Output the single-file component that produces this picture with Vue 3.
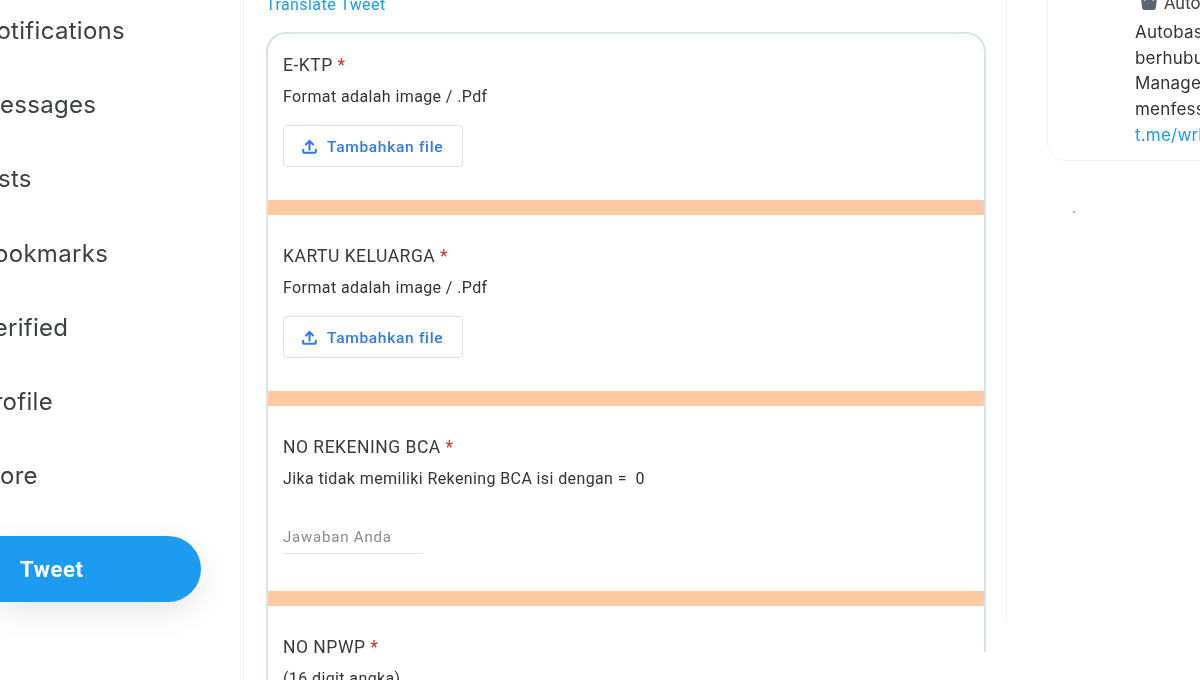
<template>
  <div class="page">
    <aside class="side">
      <ul class="nav">
        <li v-for="item in navItems" :key="item">{{ item }}</li>
      </ul>
      <button class="tweet">Tweet</button>
    </aside>

    <main class="center">
      <a class="translate">Translate Tweet</a>
      <div class="form">
        <section class="field">
          <h3 class="label">E-KTP <span class="req">*</span></h3>
          <p class="desc">Format adalah image / .Pdf</p>
          <button class="add">
            <svg width="19" height="19" viewBox="0 0 24 24" fill="none" stroke="#2f7be8" stroke-width="2.6" stroke-linecap="round">
              <path d="M12 16V5M7.5 9.5L12 5l4.500 4.500" />
              <path d="M4 16v2a2 2 0 0 0 2 2h12a2 2 0 0 0 2-2v-2" />
            </svg>
            Tambahkan file
          </button>
        </section>
        <div class="band"></div>
        <section class="field">
          <h3 class="label">KARTU KELUARGA <span class="req">*</span></h3>
          <p class="desc">Format adalah image / .Pdf</p>
          <button class="add">
            <svg width="19" height="19" viewBox="0 0 24 24" fill="none" stroke="#2f7be8" stroke-width="2.6" stroke-linecap="round">
              <path d="M12 16V5M7.5 9.5L12 5l4.500 4.500" />
              <path d="M4 16v2a2 2 0 0 0 2 2h12a2 2 0 0 0 2-2v-2" />
            </svg>
            Tambahkan file
          </button>
        </section>
        <div class="band"></div>
        <section class="field">
          <h3 class="label">NO REKENING BCA <span class="req">*</span></h3>
          <p class="desc">Jika tidak memiliki Rekening BCA isi dengan =&nbsp; 0</p>
          <div class="answer">Jawaban Anda</div>
        </section>
        <div class="band"></div>
        <section class="field">
          <h3 class="label">NO NPWP <span class="req">*</span></h3>
          <p class="desc">(16 digit angka)</p>
        </section>
      </div>
    </main>

    <aside class="right">
      <div class="box">
        <div class="box-head">
          <svg width="20" height="20" viewBox="0 0 20 20" fill="#5b6672">
            <path d="M2 5l4 3 4-6 4 6 4-3-1 9a3 3 0 0 1-3 3H6a3 3 0 0 1-3-3z" />
          </svg>
          <span>Autobase</span>
        </div>
        <p class="box-text">Autobase ini tidak<br />berhubungan dengan<br />Management. Kirim<br />menfess ke<br /><a>t.me/wrbase</a></p>
      </div>
      <span class="speck"></span>
    </aside>

    <div class="fade"></div>
  </div>
</template>

<script setup>
const navItems = ["Notifications", "Messages", "Lists", "Bookmarks", "Verified", "Profile", "More"];
</script>

<style>
body {
  background: #fff;
}
</style>

<style scoped>
.page {
  position: relative;
  display: flex;
  width: 1200px;
  height: 680px;
  overflow: hidden;
  background: #fff;
  font-family: Roboto, "Liberation Sans", sans-serif;
  color: #333;
  filter: blur(0.45px);
}

.side {
  flex: 0 0 244px;
  border-right: 1px solid #eff3f4;
  box-sizing: border-box;
  overflow: hidden;
}
.nav {
  list-style: none;
  margin: 13px 0 0 -22px;
  padding: 0;
  font-family: Inter, sans-serif;
  font-size: 24px;
  line-height: 36px;
  letter-spacing: 0.3px;
  color: #3c4043;
}
.nav li {
  margin-bottom: 38.2px;
}
.tweet {
  display: block;
  width: 201px;
  height: 66px;
  margin-top: 42px;
  padding: 0 0 0 20px;
  border: 0;
  border-radius: 0 33px 33px 0;
  background: #1d9bf0;
  color: #fff;
  font: 700 22px Roboto, sans-serif;
  letter-spacing: 0.6px;
  text-align: left;
  box-shadow: 0 10px 30px rgba(0, 0, 0, 0.1);
}

.center {
  flex: 0 0 763px;
  height: 622px;
  box-sizing: border-box;
  border-right: 1px solid #eff3f4;
  padding: 0 20px 0 22px;
}
.translate {
  display: block;
  margin-top: -5px;
  height: 37px;
  font-size: 16px;
  line-height: 20px;
  letter-spacing: 0.43px;
  color: #1d9bf0;
}
.form {
  height: 700px;
  border: 2px solid #d8e2e9;
  border-radius: 20px 20px 0 0;
  overflow: hidden;
}
.field {
  box-sizing: border-box;
  padding: 30px 0 0 15px;
}
.field:nth-of-type(1) {
  height: 166px;
  padding-top: 20px;
}
.field:nth-of-type(2) {
  height: 176px;
}
.field:nth-of-type(3) {
  height: 185px;
}
.label {
  margin: 0;
  font-size: 17.5px;
  line-height: 22px;
  font-weight: 400;
  letter-spacing: 0.5px;
  color: #3a3a3a;
}
.req {
  color: #d93025;
}
.desc {
  margin: 10px 0 0;
  font-size: 16px;
  line-height: 22px;
  letter-spacing: 0.39px;
  color: #333;
}
.add {
  display: flex;
  align-items: center;
  gap: 8px;
  width: 180px;
  height: 42px;
  margin-top: 17px;
  padding: 1px 0 0 16px;
  background: #fff;
  border: 1px solid #dfe1e8;
  border-radius: 4px;
  color: #2f7be8;
  font: 500 15.5px Roboto, sans-serif;
  letter-spacing: 0.7px;
}
.band {
  height: 15px;
  background: #fcc9a3;
}
.answer {
  width: 140px;
  margin-top: 37px;
  padding-bottom: 6px;
  border-bottom: 1px solid #dfe1e5;
  font-size: 15px;
  line-height: 20px;
  color: #8a8a8a;
  letter-spacing: 0.8px;
}

.right {
  position: relative;
  flex: 1;
  padding-left: 40px;
}
.box {
  width: 300px;
  height: 162px;
  margin-top: -1px;
  box-sizing: border-box;
  border: 1px solid #eff3f4;
  border-radius: 0 0 20px 20px;
  padding-left: 91px;
}
.box-head {
  display: flex;
  align-items: center;
  gap: 5px;
  margin-top: -8px;
  height: 22px;
  font-size: 17.500px;
  color: #444;
}
.box-text {
  margin: 6px 0 0 -4px;
  font-family: Inter, Roboto, sans-serif;
  font-size: 17px;
  line-height: 25.7px;
  letter-spacing: 0.2px;
  white-space: nowrap;
  color: #333;
}
.box-text a {
  color: #1d9bf0;
}
.speck {
  position: absolute;
  left: 66px;
  top: 211px;
  width: 2px;
  height: 2px;
  background: #a9b2b8;
}
.fade {
  position: absolute;
  right: 0;
  bottom: 0;
  width: 600px;
  height: 28px;
  background: #fff;
}
</style>
